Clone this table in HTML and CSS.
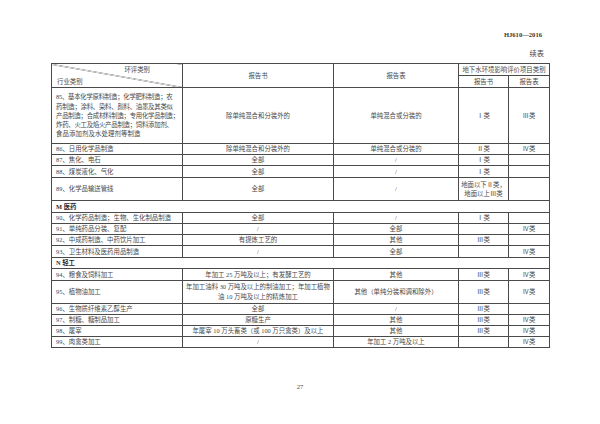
FILE: index.html
```html
<!DOCTYPE html>
<html lang="zh">
<head>
<meta charset="utf-8">
<link rel="stylesheet" href="styles.css">
</head>
<body>
<div class="page">
  <div class="doc-id">HJ610—2016</div>
  <div class="cont">续表</div>
  <table class="grid">
    <colgroup>
      <col class="c1"><col class="c2"><col class="c3"><col class="c4"><col class="c5">
    </colgroup>
    <tr class="hr">
      <td rowspan="2" class="diag">
        <div class="diag-in">
          <span class="h-top">环评类别</span>
          <span class="h-bot">行业类别</span>
        </div>
      </td>
      <td rowspan="2" class="ctr">报告书</td>
      <td rowspan="2" class="ctr">报告表</td>
      <td colspan="2" class="ctr tight">地下水环境影响评价项目类别</td>
    </tr>
    <tr class="hr">
      <td class="ctr tight">报告书</td>
      <td class="ctr tight">报告表</td>
    </tr>
    <tr class="r5">
      <td class="lft multi">
        <span class="jl">85、基本化学原料制造；化学肥料制造；农</span>
        <span class="jl">药制造；涂料、染料、颜料、油墨及其类似</span>
        <span class="jl">产品制造；合成材料制造；专用化学品制造；</span>
        <span class="jl">炸药、火工及焰火产品制造；饲料添加剂、</span>
        <span class="ll">食品添加剂及水处理剂等制造</span>
      </td>
      <td class="ctr">除单纯混合和分装外的</td>
      <td class="ctr">单纯混合或分装的</td>
      <td class="ctr">Ⅰ类</td>
      <td class="ctr">Ⅲ类</td>
    </tr>
    <tr class="r1"><td class="lft">86、日用化学品制造</td><td class="ctr">除单纯混合和分装外的</td><td class="ctr">单纯混合或分装的</td><td class="ctr">Ⅱ类</td><td class="ctr">Ⅳ类</td></tr>
    <tr class="r1"><td class="lft">87、焦化、电石</td><td class="ctr">全部</td><td class="ctr">/</td><td class="ctr">Ⅰ类</td><td></td></tr>
    <tr class="r1b"><td class="lft">88、煤炭液化、气化</td><td class="ctr">全部</td><td class="ctr">/</td><td class="ctr">Ⅰ类</td><td></td></tr>
    <tr class="r2"><td class="lft">89、化学品输送管线</td><td class="ctr">全部</td><td class="ctr">/</td><td class="ctr tight">地面以下Ⅱ类，<br>地面以上Ⅲ类</td><td></td></tr>
    <tr class="r1b"><td colspan="5" class="lft sec">M 医药</td></tr>
    <tr class="r1"><td class="lft">90、化学药品制造；生物、生化制品制造</td><td class="ctr">全部</td><td class="ctr">/</td><td class="ctr">Ⅰ类</td><td></td></tr>
    <tr class="r1"><td class="lft">91、单纯药品分装、复配</td><td class="ctr">/</td><td class="ctr">全部</td><td></td><td class="ctr">Ⅳ类</td></tr>
    <tr class="r1"><td class="lft">92、中成药制造、中药饮片加工</td><td class="ctr">有提炼工艺的</td><td class="ctr">其他</td><td class="ctr">Ⅲ类</td><td></td></tr>
    <tr class="r1b"><td class="lft">93、卫生材料及医药用品制造</td><td class="ctr">/</td><td class="ctr">全部</td><td></td><td class="ctr">Ⅳ类</td></tr>
    <tr class="r1"><td colspan="5" class="lft sec">N 轻工</td></tr>
    <tr class="r1b"><td class="lft">94、粮食及饲料加工</td><td class="ctr">年加工 25 万吨及以上；有发酵工艺的</td><td class="ctr">其他</td><td class="ctr">Ⅲ类</td><td class="ctr">Ⅳ类</td></tr>
    <tr class="r2"><td class="lft">95、植物油加工</td><td class="ctr tight">年加工油料 30 万吨及以上的制油加工；年加工植物<br>油 10 万吨及以上的精炼加工</td><td class="ctr">其他（单纯分装和调和除外）</td><td class="ctr">Ⅲ类</td><td class="ctr">Ⅳ类</td></tr>
    <tr class="r1"><td class="lft">96、生物质纤维素乙醇生产</td><td class="ctr">全部</td><td class="ctr">/</td><td class="ctr">Ⅲ类</td><td></td></tr>
    <tr class="r1"><td class="lft">97、制糖、糖制品加工</td><td class="ctr">原糖生产</td><td class="ctr">其他</td><td class="ctr">Ⅲ类</td><td class="ctr">Ⅳ类</td></tr>
    <tr class="r1"><td class="lft">98、屠宰</td><td class="ctr tight">年屠宰 10 万头畜类（或 100 万只禽类）及以上</td><td class="ctr">其他</td><td class="ctr">Ⅲ类</td><td class="ctr">Ⅳ类</td></tr>
    <tr class="r1"><td class="lft">99、肉禽类加工</td><td class="ctr">/</td><td class="ctr">年加工 2 万吨及以上</td><td></td><td class="ctr">Ⅳ类</td></tr>
  </table>
  <div class="pagenum">27</div>
</div>
</body>
</html>
```

FILE: styles.css
```css
html, body {
  margin: 0;
  padding: 0;
  background: #ffffff;
}

.page {
  width: 600px;
  height: 424px;
  box-sizing: border-box;
  padding: 31px 51px 0 51px;
  font-family: "Liberation Serif", "Noto Sans CJK SC", serif;
  color: #484848;
}

.doc-id {
  text-align: right;
  font-size: 6.6px;
  line-height: 8px;
  font-weight: bold;
  padding-right: 7px;
  color: #383838;
}

.cont {
  text-align: right;
  font-size: 7.2px;
  line-height: 9px;
  margin-top: 10.5px;
  padding-right: 5px;
}

.grid {
  margin-top: 4.5px;
  width: 498px;
  table-layout: fixed;
  border-collapse: collapse;
  border: 1.5px solid #2a2a2a;
  font-size: 6.4px;
  line-height: 9.3px;
}

.c1 { width: 131px; }
.c2 { width: 151px; }
.c3 { width: 125px; }
.c4 { width: 50px; }
.c5 { width: 41px; }

.grid td {
  border: 1px solid #4a4a4a;
  padding: 0 4px;
  vertical-align: middle;
  white-space: nowrap;
  overflow: hidden;
}

.grid td.tight {
  padding: 0 1px;
}

.hr td { height: 11px; }
.r1 td { height: 10px; }
.r1b td { height: 10.8px; }
.r2 td { height: 22.4px; }
.r5 td { height: 55px; }

.ctr { text-align: center; }
.lft { text-align: left; }

.sec {
  font-weight: bold;
  color: #2a2a2a;
}

.diag {
  background: linear-gradient(to top right, transparent calc(50% - 0.6px), #555555 50%, transparent calc(50% + 0.6px));
  padding: 0 !important;
}

.diag-in {
  display: flex;
  flex-direction: column;
  gap: 2px;
  padding: 1px 4px 1px 5px;
}

.h-top {
  align-self: flex-end;
  padding-right: 28px;
}

.h-bot {
  align-self: flex-start;
}

.multi {
  padding-left: 5px;
}

.jl {
  display: block;
  letter-spacing: -0.25px;
  text-align: justify;
  text-align-last: justify;
  padding-right: 6px;
}

.ll {
  display: block;
  letter-spacing: 0.1px;
}

.pagenum {
  text-align: center;
  font-size: 6.6px;
  line-height: 8px;
  margin-top: 35px;
}
```
